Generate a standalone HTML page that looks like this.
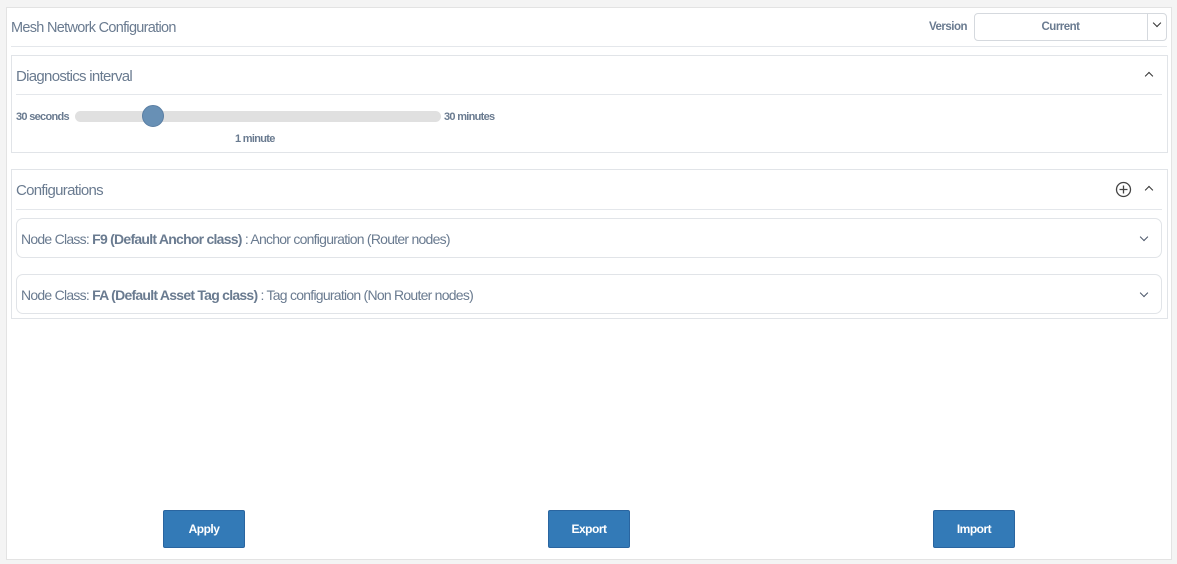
<!DOCTYPE html>
<html><head><style>
*{box-sizing:border-box;margin:0;padding:0}
body{width:1177px;height:564px;background:#f4f4f4;font-family:"Liberation Sans",sans-serif;color:#6a7b90;position:relative;overflow:hidden;letter-spacing:-0.5px}
.abs{position:absolute}
.panel{left:6px;top:7px;width:1166px;height:553px;background:#fff;border:1px solid #e3e3e3}
.box{background:#fff;border:1px solid #e1e4e8}
.line{height:1px;background:#e4e7eb}
.btn{background:#337ab7;border:1px solid #2a65a0;border-radius:2px;color:#fff;font-weight:bold;font-size:12px;text-align:center;line-height:37px;width:82px;height:38px;top:510px}
.item{left:16px;width:1146px;height:40px;border:1px solid #e1e4e8;border-radius:7px;font-size:14px;line-height:40px;padding-left:4px;letter-spacing:-0.75px}
.chev{position:absolute;right:14px;top:15px;width:6px;height:6px;border-right:1.5px solid #4a5568;border-bottom:1.5px solid #4a5568;transform:rotate(45deg)}
.up{position:absolute;width:6px;height:6px;border-left:1.5px solid #333;border-top:1.5px solid #333;transform:rotate(45deg)}
</style></head><body>
<div class="abs panel"></div>
<div class="abs" style="left:11px;top:20px;font-size:14.5px;letter-spacing:-0.7px">Mesh Network Configuration</div>
<div class="abs" style="left:929px;top:21px;font-size:11.5px;font-weight:bold">Version</div>
<div class="abs box" style="left:974px;top:13px;width:193px;height:28px;border-radius:4px;border-color:#d5d9de"></div>
<div class="abs" style="left:974px;top:21px;width:173px;text-align:center;font-size:11.5px;font-weight:bold">Current</div>
<div class="abs" style="left:1147px;top:13px;width:1px;height:28px;background:#d5d9de"></div>
<div class="abs" style="left:1154px;top:20px;width:6px;height:6px;border-right:1.5px solid #333;border-bottom:1.5px solid #333;transform:rotate(45deg)"></div>
<div class="abs line" style="left:11px;top:46px;width:1156px"></div>

<div class="abs box" style="left:11px;top:55px;width:1157px;height:98px"></div>
<div class="abs" style="left:16px;top:68px;font-size:15px;letter-spacing:-0.7px">Diagnostics interval</div>
<div class="up" style="left:1146px;top:73px"></div>
<div class="abs line" style="left:16px;top:94px;width:1146px"></div>
<div class="abs" style="left:16px;top:111px;font-size:11px;font-weight:bold;letter-spacing:-0.7px">30 seconds</div>
<div class="abs" style="left:75px;top:111px;width:366px;height:11px;background:#e0e0e0;border-radius:6px"></div>
<div class="abs" style="left:142px;top:105px;width:22px;height:22px;border-radius:50%;background:#6890b5;border:1px solid #5a7ea3"></div>
<div class="abs" style="left:444px;top:111px;font-size:11px;font-weight:bold;letter-spacing:-0.7px">30 minutes</div>
<div class="abs" style="left:235px;top:133px;font-size:11px;font-weight:bold;letter-spacing:-0.7px">1 minute</div>

<div class="abs box" style="left:11px;top:169px;width:1157px;height:150px"></div>
<div class="abs" style="left:16px;top:182px;font-size:15px;letter-spacing:-0.7px">Configurations</div>
<svg class="abs" style="left:1115px;top:181px" width="17" height="17" viewBox="0 0 17 17"><circle cx="8.5" cy="8.5" r="7" fill="none" stroke="#444" stroke-width="1.3"/><path d="M8.5 4.5v8M4.5 8.5h8" stroke="#444" stroke-width="1.3"/></svg>
<div class="up" style="left:1146px;top:187px"></div>
<div class="abs line" style="left:16px;top:209px;width:1146px"></div>
<div class="abs item" style="top:218px">Node Class: <b>F9 (Default Anchor class)</b> : Anchor configuration (Router nodes)<div class="chev"></div></div>
<div class="abs item" style="top:274px">Node Class: <b>FA (Default Asset Tag class)</b> : Tag configuration (Non Router nodes)<div class="chev"></div></div>

<div class="abs btn" style="left:163px">Apply</div>
<div class="abs btn" style="left:548px">Export</div>
<div class="abs btn" style="left:933px">Import</div>
</body></html>
